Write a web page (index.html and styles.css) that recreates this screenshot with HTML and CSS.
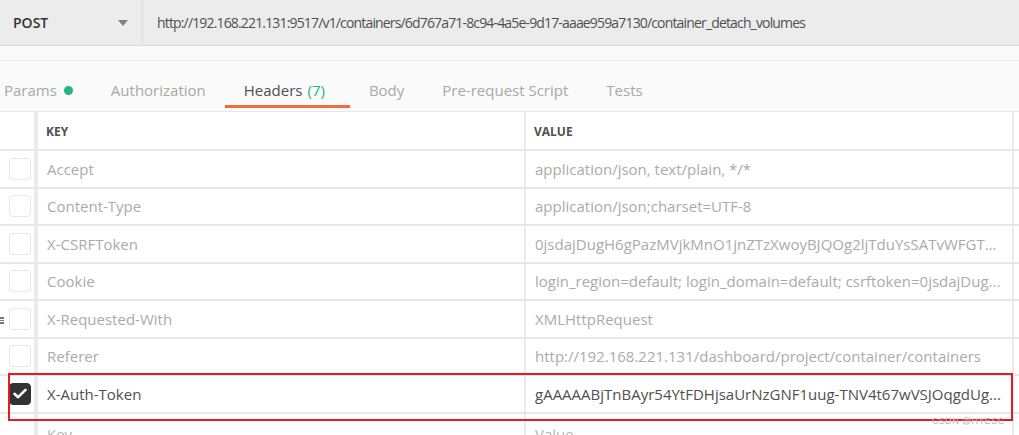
FILE: index.html
```html
<!DOCTYPE html>
<html>
<head>
<meta charset="utf-8">
<link rel="stylesheet" href="styles.css">
</head>
<body>
<div class="page">
  <div class="topbar">
    <div class="method">
      <span class="method-name">POST</span>
      <svg class="caret" width="10" height="6" viewBox="0 0 10 6"><path d="M0 0h10L5 6z" fill="#808080"/></svg>
    </div>
    <div class="url">http://192.168.221.131:9517/v1/containers/6d767a71-8c94-4a5e-9d17-aaae959a7130/container_detach_volumes</div>
  </div>
  <div class="spacer"></div>
  <div class="tabs">
    <div class="tab">Params <span class="dot"></span></div>
    <div class="tab">Authorization</div>
    <div class="tab active">Headers <span class="count">(7)</span></div>
    <div class="tab">Body</div>
    <div class="tab">Pre-request Script</div>
    <div class="tab">Tests</div>
  </div>
  <div class="table">
    <div class="row head">
      <div class="c-check"></div>
      <div class="c-key">KEY</div>
      <div class="c-val">VALUE</div>
    </div>
    <div class="row">
      <div class="c-check"><span class="box"></span></div>
      <div class="c-key">Accept</div>
      <div class="c-val">application/json, text/plain, */*</div>
    </div>
    <div class="row">
      <div class="c-check"><span class="box"></span></div>
      <div class="c-key">Content-Type</div>
      <div class="c-val">application/json;charset=UTF-8</div>
    </div>
    <div class="row">
      <div class="c-check"><span class="box"></span></div>
      <div class="c-key">X-CSRFToken</div>
      <div class="c-val">0jsdajDugH6gPazMVjkMnO1jnZTzXwoyBJQOg2ljTduYsSATvWFGT...</div>
    </div>
    <div class="row">
      <div class="c-check"><span class="box"></span></div>
      <div class="c-key">Cookie</div>
      <div class="c-val">login_region=default; login_domain=default; csrftoken=0jsdajDug...</div>
    </div>
    <div class="row hover">
      <div class="c-check"><span class="handle"><i></i><i></i><i></i></span><span class="box"></span></div>
      <div class="c-key">X-Requested-With</div>
      <div class="c-val">XMLHttpRequest</div>
    </div>
    <div class="row">
      <div class="c-check"><span class="box"></span></div>
      <div class="c-key">Referer</div>
      <div class="c-val">http://192.168.221.131/dashboard/project/container/containers</div>
    </div>
    <div class="row on">
      <div class="c-check"><span class="box checked"><svg width="14" height="11" viewBox="0 0 14 11"><path d="M1.5 5.8l3.6 3.4L12.5 1.8" fill="none" stroke="#fff" stroke-width="2.6" stroke-linecap="round" stroke-linejoin="round"/></svg></span></div>
      <div class="c-key">X-Auth-Token</div>
      <div class="c-val">gAAAAABjTnBAyr54YtFDHjsaUrNzGNF1uug-TNV4t67wVSJOqgdUg...</div>
    </div>
    <div class="row placeholder">
      <div class="c-check"></div>
      <div class="c-key">Key</div>
      <div class="c-val">Value</div>
    </div>
  </div>
  <div class="highlight"></div>
  <div class="watermark">CSDN @HYESC</div>
</div>
</body>
</html>
```

FILE: styles.css
```css
html, body {
  margin: 0;
  padding: 0;
  background: #fafafa;
}
.page {
  position: relative;
  width: 1019px;
  height: 435px;
  overflow: hidden;
  font-family: "Open Sans", "Liberation Sans", sans-serif;
  color: #505050;
}
.topbar {
  display: flex;
  height: 45px;
  background: #ececec;
  border-bottom: 1px solid #dcdcdc;
}
.method {
  width: 143px;
  border-right: 1px solid #dcdcdc;
  display: flex;
  align-items: center;
  justify-content: space-between;
  padding: 0 14px 0 13px;
  box-sizing: border-box;
}
.method-name {
  font-size: 14px;
  font-weight: 600;
  color: #333;
}
.caret { margin-top: 1px; }
.url {
  display: flex;
  align-items: center;
  padding-left: 14px;
  font-size: 14px;
  color: #505050;
  letter-spacing: -0.84px;
  white-space: nowrap;
}
.spacer {
  height: 14px;
  border-bottom: 1px solid #ebebeb;
}
.tabs {
  display: flex;
  height: 50px;
  margin-left: -15px;
}
.tab {
  display: flex;
  align-items: center;
  padding: 14px 19px 0 19px;
  font-size: 15px;
  color: #a8a8a8;
  border-bottom: 3px solid transparent;
  margin-bottom: 3px;
}
.tab.active {
  color: #505050;
  border-bottom-color: #f26b3a;
  padding-right: 25px;
}
.count { color: #26b47f; margin-left: 5px; }
.dot {
  display: inline-block;
  width: 9px;
  height: 9px;
  border-radius: 50%;
  background: #26b47f;
  margin-left: 7px;
}
.table {
  border-top: 1px solid #e8e8e8;
  background: #fff;
}
.row {
  position: relative;
  display: flex;
  height: 37.5px;
  box-sizing: border-box;
  border-bottom: 2px solid #e8e8e8;
}
.row.head {
  height: 39px;
}
.c-check {
  flex: none;
  border-right: 4px solid #ebebeb;
  display: flex;
  align-items: center;
  padding-left: 9px;
  box-sizing: content-box;
  width: 25px;
}
.c-key, .c-val {
  flex: none;
  box-sizing: border-box;
  width: 488px;
  padding: 0 4px 0 9px;
  display: flex;
  align-items: center;
  font-size: 15px;
  color: #ababab;
  white-space: nowrap;
  overflow: hidden;
  border-right: 2px solid #ebebeb;
}
.head .c-key, .head .c-val {
  font-size: 12px;
  font-weight: 700;
  color: #505050;
  padding-left: 8px;
  padding-top: 1px;
}
.on .c-key, .on .c-val { color: #505050; }
.placeholder .c-key, .placeholder .c-val { color: #b4b4b4; align-items: flex-start; padding-top: 10px; }
.box {
  width: 22px;
  height: 22px;
  box-sizing: border-box;
  border: 1px solid #e6e6e6;
  border-radius: 4px;
  background: #fff;
  display: flex;
  align-items: center;
  justify-content: center;
}
.box.checked {
  background: #333;
  border-color: #333;
}
.handle {
  position: absolute;
  left: 0;
  top: 16px;
  display: flex;
  flex-direction: column;
  gap: 1px;
}
.handle i {
  display: block;
  width: 4px;
  height: 1.5px;
  background: #777;
}
.highlight {
  position: absolute;
  left: 8px;
  top: 373px;
  width: 1005px;
  height: 48px;
  box-sizing: border-box;
  border: 2px solid #e41b23;
}
.watermark {
  position: absolute;
  left: 932px;
  top: 416px;
  font-family: "Liberation Sans", sans-serif;
  font-size: 9px;
  color: #b4b4b4;
  letter-spacing: 0.4px;
}
```
